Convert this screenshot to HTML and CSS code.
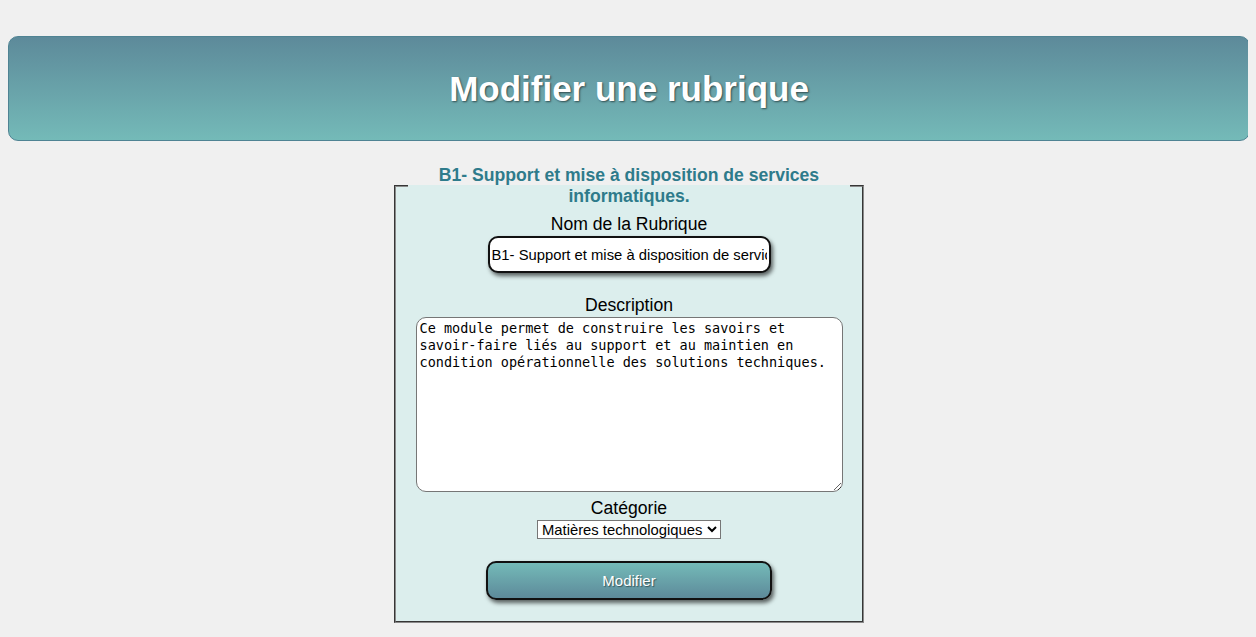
FILE: index.html
```html
<!DOCTYPE html>
<html lang="fr">
<head>
<meta charset="utf-8">
<title>Modifier une rubrique</title>
<link rel="stylesheet" href="styles.css">
</head>
<body>
<header class="banner">
  <h1 class="banner-title">Modifier une rubrique</h1>
</header>
<form class="edit-form">
  <fieldset class="panel">
    <legend class="panel-legend">B1- Support et mise à disposition de services informatiques.</legend>
    <label class="field-label" for="nom">Nom de la Rubrique</label>
    <input class="name-input" id="nom" type="text" value="B1- Support et mise à disposition de services informatiques.">
    <label class="field-label label-desc" for="desc">Description</label>
    <textarea class="desc-area" id="desc">Ce module permet de construire les savoirs et savoir-faire liés au support et au maintien en condition opérationnelle des solutions techniques.</textarea>
    <label class="field-label label-cat" for="cat">Catégorie</label>
    <select class="cat-select" id="cat">
      <option selected>Matières technologiques</option>
      <option>Matières générales</option>
    </select>
    <button class="submit-btn" type="button">Modifier</button>
  </fieldset>
</form>
</body>
</html>
```

FILE: styles.css
```css
html, body {
  background: #f0f0f0;
}
body {
  margin: 8px;
  font-family: "Liberation Sans", Arial, sans-serif;
  color: #000;
}
.banner {
  box-sizing: border-box;
  height: 105px;
  margin: 28px -2px 0 0;
  border: 1px solid #4f8393;
  border-radius: 10px;
  background: linear-gradient(to bottom, #5d8a9a, #74bab8);
  display: flex;
  align-items: center;
  justify-content: center;
}
.banner-title {
  margin: 0;
  color: #fff;
  font-size: 35px;
  font-weight: bold;
  line-height: 40px;
  text-shadow: 1px 1px 2px rgba(0, 0, 0, 0.55);
}
.edit-form {
  margin-top: 24px;
  padding-left: 2px;
}
.panel {
  box-sizing: border-box;
  width: 470px;
  margin: 0 auto;
  padding: 7px 12px 21px;
  border: 2px groove #8a8a8a;
  background: #dceeed;
  display: flex;
  flex-direction: column;
  align-items: center;
}
.panel-legend {
  text-align: center;
  color: #2e7b8b;
  font-size: 17.6px;
  font-weight: bold;
  line-height: 21px;
  padding: 0 2px;
}
.field-label {
  display: block;
  font-size: 17.6px;
  line-height: 20px;
  text-align: center;
}
.name-input {
  box-sizing: border-box;
  width: 283px;
  height: 37px;
  margin-top: 2px;
  padding: 1px 2px;
  border: 2px solid #111;
  border-radius: 10px;
  background: #fff;
  font-family: "Liberation Sans", Arial, sans-serif;
  font-size: 14.8px;
  color: #000;
  box-shadow: 2px 3px 4px rgba(0, 0, 0, 0.6);
  outline: none;
}
.label-desc {
  margin-top: 22px;
}
.desc-area {
  box-sizing: border-box;
  width: 427px;
  height: 175px;
  margin-top: 2px;
  padding: 2px 10px 2px 3px;
  border: 1px solid #767676;
  border-radius: 10px;
  background: #fff;
  font-family: "DejaVu Sans Mono", "Liberation Mono", monospace;
  font-size: 13.5px;
  line-height: 17px;
  color: #000;
  resize: both;
}
.label-cat {
  margin-top: 6px;
}
.cat-select {
  box-sizing: border-box;
  width: 184px;
  height: 19px;
  margin-top: 2px;
  font-family: "Liberation Sans", Arial, sans-serif;
  font-size: 14.8px;
  color: #000;
  background: #fff;
  border: 1px solid #767676;
  border-radius: 0;
}
.submit-btn {
  box-sizing: border-box;
  width: 286px;
  height: 39px;
  margin-top: 22px;
  border: 2px solid #111;
  border-radius: 10px;
  background: linear-gradient(to bottom, #74bab8, #5d8a9a);
  color: #fff;
  font-family: "Liberation Sans", Arial, sans-serif;
  font-size: 15px;
  text-shadow: 1px 1px 1px rgba(0, 0, 0, 0.45);
  box-shadow: 2px 3px 4px rgba(0, 0, 0, 0.6);
  cursor: pointer;
}
```
